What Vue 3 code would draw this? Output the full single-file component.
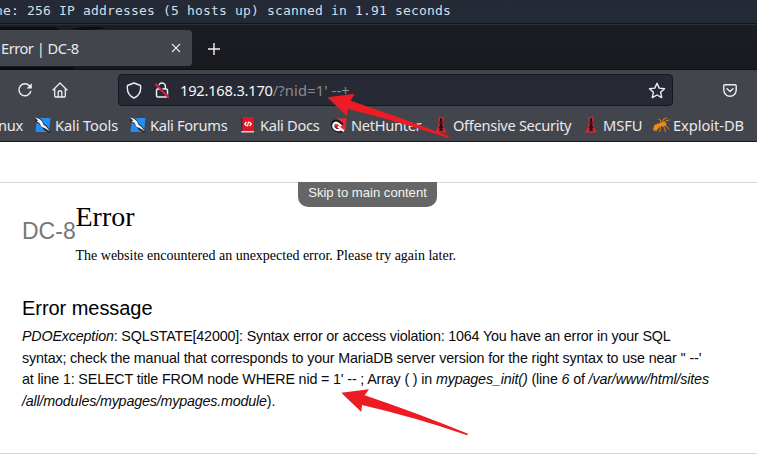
<script setup>
const bookmarks = [
  { name: 'Kali Tools', icon: 'kali', cls: 'tools' },
  { name: 'Kali Forums', icon: 'kali', cls: 'forums' },
  { name: 'Kali Docs', icon: 'docs', cls: 'docs' },
  { name: 'NetHunter', icon: 'hunter', cls: 'hunter' },
  { name: 'Offensive Security', icon: 'offsec', cls: 'offsec' },
  { name: 'MSFU', icon: 'offsec', cls: 'msfu' },
  { name: 'Exploit-DB', icon: 'ant', cls: 'exploit' }
]
</script>

<template>
  <div class="screen">
    <div class="terminal"><span>ne: 256 IP addresses (5 hosts up) scanned in 1.91 seconds</span></div>
    <div class="tabs">
      <svg class="dragon" width="192" height="46" viewBox="0 0 192 46"><path d="M0 2h55l4 3H0zM70 4q20-4 37-1l-20 2zM0 42h76l-5 3H0z" fill="#0b0c0f" /></svg>
      <div class="tab">
        <span>Error | DC-8</span>
        <svg width="10" height="10" viewBox="0 0 10 10"><path d="M1 1l8 8M9 1L1 9" stroke="#e4e4e7" stroke-width="1.1" /></svg>
      </div>
      <svg class="plus" width="14" height="14" viewBox="0 0 14 14"><path d="M7 1v12M1 7h12" stroke="#f4f4f6" stroke-width="1.4" /></svg>
    </div>
    <div class="nav">
      <svg class="reload" width="16" height="16" viewBox="0 0 16 16" fill="none" stroke="#eeeef0" stroke-width="1.4"><path d="M13.7 9.5A6 6 0 1 1 12.6 4" stroke-linecap="round" /><path d="M14.8 1.2v5.2H9.6z" fill="#eeeef0" stroke="none" /></svg>
      <svg class="home" width="16" height="16" viewBox="0 0 16 16" fill="none" stroke="#eeeef0" stroke-width="1.3" stroke-linejoin="round" stroke-linecap="round"><path d="M1 8l7-7 7 7M2.7 6.8V14a1 1 0 0 0 1 1h8.6a1 1 0 0 0 1-1V6.8" /><path d="M6.2 14.8V10q0-1 1-1h1.6q1 0 1 1v4.8" /></svg>
      <div class="address">
        <svg class="shield" width="16" height="17" viewBox="0 0 16 17" fill="none" stroke="#eeeef0" stroke-width="1.4" stroke-linejoin="round"><path d="M8 1l6.5 2.5c.8 6-1.5 10.3-6.5 12.5C3 13.8 .7 9.5 1.5 3.5z" /></svg>
        <svg class="lock" width="16" height="17" viewBox="0 0 16 17" fill="none" stroke="#eeeef0" stroke-width="1.5"><path d="M4.6 7V4.5a3.4 3.4 0 0 1 6.8 0V7" /><rect x="2.5" y="7" width="11" height="8" rx="1.5" /><path d="M2 1l13 14" stroke="#272934" stroke-width="1.5" /><path d="M1.3 1.800l13.500 14" stroke="#e22850" stroke-width="1.7" /></svg>
        <span class="url"><span class="host">192.168.3.170</span><span class="path">/?nid=1' --+</span></span>
        <svg class="star" width="18" height="17" viewBox="0 0 18 17" fill="none" stroke="#eeeef0" stroke-width="1.4" stroke-linejoin="round"><path d="M9 1.2l2.2 4.9 5.3.6-3.9 3.6 1.1 5.3L9 13l-4.7 2.6 1.1-5.3-3.9-3.6 5.3-.6z" /></svg>
      </div>
      <svg class="pocket" width="14" height="13" viewBox="0 0 14 13" fill="none" stroke="#eeeef0" stroke-width="1.4" stroke-linecap="round" stroke-linejoin="round"><path d="M2 .8h10q1.2 0 1.2 1.2v4A6.2 6.2 0 0 1 .8 6V2Q.8.8 2 .8z" /><path d="M4 4.7l3 2.8 3-2.8" /></svg>
    </div>
    <div class="bookmarks">
      <span class="linux">nux</span>
      <div v-for="b in bookmarks" :key="b.name" class="bookmark" :class="b.cls">
        <svg v-if="b.icon === 'kali'" width="16" height="16" viewBox="0 0 16 16"><path d="M2 1h13.500L14 15H.5z" fill="#238cf5" /><path d="M0 1h4l3 2 2 4 3 2 4 6-2 1-5-3-3-4-3-3-3-1z" fill="#252936" /><path d="M0 .5l4 1.300 3 2.500 1.500 3.500 2.800 2L15 14.500l-5-3.300-3.500-1.500-2.200-4-3-1.500 2-.5z" fill="#f4f6fa" /></svg>
        <svg v-else-if="b.icon === 'docs'" width="14" height="16" viewBox="0 0 14 16"><path d="M0 1h2v14H0z" fill="#283060" /><path d="M1.5 0H13v14H1.5z" fill="#e31420" /><path d="M.5 14H13v1.5H0z" fill="#d9d6d8" /><path d="M5.5 5L3.7 7l1.800 2M8.500 5l1.800 2-1.800 2M7.600 4.700L6.400 9.300" stroke="#fff" stroke-width="1.2" fill="none" /></svg>
        <svg v-else-if="b.icon === 'hunter'" width="16" height="16" viewBox="0 0 16 16"><path d="M3 2l12.500-1-1 12-4 2-7-7z" fill="#e52732" /><path d="M11.500 8L7 4.500Q3.500 3 1.800 6.500 1 10.500 4.500 12.500q4 2.500 7 1" fill="none" stroke="#151519" stroke-width="3.4" /><path d="M10.500 9L7 6.300Q4 4.500 2.500 7.300q-1 3 2 5 3.500 2 5.300-.5L7 9.500M9.500 12l3.500 2" fill="none" stroke="#fff" stroke-width="2.1" /></svg>
        <svg v-else-if="b.icon === 'offsec'" width="12" height="16" viewBox="0 0 12 16"><path d="M3.500 0h5v9L12 15.500H0L3.500 9z" fill="#df2029" /><path d="M5 1h2l.5 8 1 1-1.200 2L8 14H4l.8-2-1-2 1-1z" fill="#2b1015" /><path d="M4 5.500h4" stroke="#641119" /></svg>
        <svg v-else width="17" height="16" viewBox="0 0 17 16"><path d="M0 12l1.500-4 3.500-1.500 3-.5 2.500-1.500 3 1.500-.5 2.500-3 1-2.500-.5L4.500 12.500 1 14z" fill="#ea8a19" /><path d="M5 9L3 14.500M7.500 9l-.7 6M9 8.500l2.500 2 1 4.500M11 8l3 1.500 2 3M9.500 6l.5-3.500L14 .8M8 6.500L7.500 3 5.500 2M11 5.500l2.500-2 3-.5" fill="none" stroke="#ea8a19" stroke-width=".9" /></svg>
        <span>{{ b.name }}</span>
      </div>
    </div>
    <div class="page">
      <div class="rule"></div>
      <a class="skip">Skip to main content</a>
      <div class="head">
        <span class="site">DC-8</span>
        <div>
          <h1>Error</h1>
          <p>The website encountered an unexpected error. Please try again later.</p>
        </div>
      </div>
      <div class="message">
        <h2>Error message</h2>
        <div class="l1"><i>PDOException</i>: SQLSTATE[42000]: Syntax error or access violation: 1064 You have an error in your SQL</div>
        <div class="l2">syntax; check the manual that corresponds to your MariaDB server version for the right syntax to use near '' --'</div>
        <div class="l3">at line 1: SELECT title FROM node WHERE nid = 1' -- ; Array ( ) in <i>mypages_init()</i> (line <i>6</i> of <i>/var/www/html/sites</i></div>
        <div class="l4"><i>/all/modules/mypages/mypages.module</i>).</div>
      </div>
    </div>
    <svg class="arrows" width="757" height="464" viewBox="0 0 757 464" fill="#ed1c24">
      <path d="M327.3 97.3L354.7 93.7 350.7 100.7Q400 117 449 136.3L448 138Q397 121 348 109L346.7 116z" />
      <path d="M341.3 392.7L369 389.3 364.7 395.3Q414 412 468 433.7L467.3 435.2Q414 417 362 405L361.3 412z" />
    </svg>
  </div>
</template>

<style>
body { margin: 0; overflow: hidden; }
</style>

<style scoped>
.screen { position: relative; width: 757px; height: 464px; overflow: hidden; background: #fff; font-family: "Noto Sans", sans-serif; white-space: nowrap; }
.screen svg { display: block; flex: none; }
.terminal { height: 24px; box-sizing: border-box; background: linear-gradient(#252a35, #222b36); color: #d7dee7; font: 13px/22px "DejaVu Sans Mono", monospace; letter-spacing: .174px; border-bottom: 1px solid #11141a; }
.terminal span { margin-left: -5px; }
.tabs { position: relative; height: 46px; box-sizing: border-box; background: linear-gradient(#1b1d24, #191a1f); border-top: 1px solid #2b2e35; border-bottom: 1px solid #111216; display: flex; align-items: flex-start; padding-top: 5px; }
.dragon { position: absolute; left: 0; top: 0; }
.tab { position: relative; width: 192px; height: 36px; box-sizing: border-box; background: #42454c; border-radius: 0 4px 4px 0; display: flex; justify-content: space-between; align-items: center; padding: 0 11px 0 1px; color: #e9e9ec; font-size: 14.67px; letter-spacing: -.5px; }
.plus { margin: 12px 0 0 15px; }
.nav { height: 40px; background: #42454c; display: flex; align-items: center; padding-left: 17px; }
.home { margin-left: 19px; }
.address { margin: 0 0 0 50px; width: 555px; height: 32px; box-sizing: border-box; border: 1px solid #16181f; border-radius: 4px; background: #272934; display: flex; align-items: center; padding-left: 7px; }
.lock { margin-left: 12px; }
.url { margin-left: 10px; font-size: 14.67px; width: 460px; }
.host { color: #f6f6f8; letter-spacing: -.22px; }
.path { color: #8b8c94; letter-spacing: .14px; }
.star { margin-left: 8px; }
.pocket { margin-left: 50px; }
.bookmarks { position: relative; height: 32px; box-sizing: border-box; background: #42454c; border-bottom: 1px solid #191a1d; color: #e9e9ec; font-size: 14.67px; letter-spacing: -.33px; display: flex; align-items: center; padding-bottom: 1px; }
.linux { width: 37px; margin-left: -2px; }
.bookmark { display: flex; align-items: center; gap: 4px; }
.tools { width: 95px; letter-spacing: -.12px; }
.forums { width: 111px; }
.docs { width: 90px; gap: 5px; }
.hunter { width: 104px; }
.offsec { width: 150px; gap: 6px; }
.msfu { width: 68px; gap: 6px; letter-spacing: -.1px; }
.exploit { gap: 3px; letter-spacing: -.05px; }
.page { position: relative; height: 322px; box-sizing: border-box; padding: 40px 0 0 22px; font-family: "Liberation Sans", sans-serif; color: #0a0a0a; }
.rule { height: 1px; margin-left: -22px; background: #d8d8d8; }
.skip { position: absolute; left: 298px; top: 40px; width: 139px; height: 25px; border-radius: 0 0 10px 10px; background: #666; color: #f4f4f4; text-align: center; font-size: 13.1px; line-height: 21px; }
.head { height: 102px; display: flex; }
.site { width: 53.5px; padding-top: 34px; font-size: 23px; line-height: 28px; color: #777; }
h1 { margin: 17px 0 0; font: 28px/34px "Liberation Serif", serif; color: #000; }
p { margin: 13px 0 0; font: 14px/18px "Liberation Serif", serif; color: #000; }
.message { height: 158px; border-bottom: 1px solid #d8d8d8; margin-left: -22px; padding-left: 22px; font-size: 14.3px; line-height: 21.6px; letter-spacing: -.15px; }
.l1 { letter-spacing: -.17px; }
.l2 { letter-spacing: -.145px; }
.l4 { letter-spacing: -.18px; }
h2 { margin: 10px 0 5px; font-size: 20px; font-weight: 400; line-height: 26px; color: #000; letter-spacing: -.05px; }
.arrows { position: absolute; left: 0; top: 0; }
</style>
